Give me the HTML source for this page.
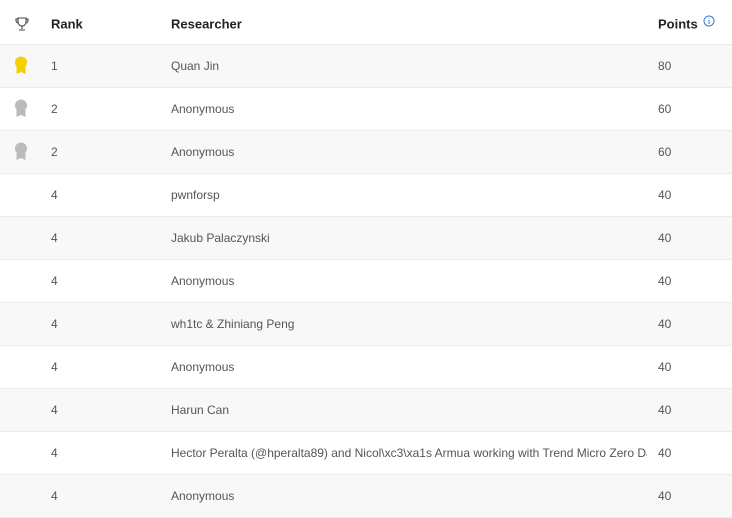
<!DOCTYPE html>
<html><head><style>
body{margin:0;width:732px;height:517px;overflow:hidden;background:#fff;font-family:"Liberation Sans",sans-serif;}
.h{height:45px;position:relative;border-bottom:1px solid #eaeaea;box-sizing:border-box;font-weight:bold;font-size:13px;color:#222;}
.h .c{margin-top:2px}
.r{height:43px;position:relative;border-bottom:1px solid #ececec;box-sizing:border-box;font-size:12px;color:#555;}
.r.s{background:#f8f8f8;}
.c{position:absolute;top:50%;transform:translateY(-50%);white-space:nowrap;}
.a{left:51px}.b{left:171px;width:476px;overflow:hidden}.p{left:658px}
.i{left:13px}
</style></head><body>
<div class="h">
<svg class="c i" style="left:14px" width="16" height="16" viewBox="0 0 16 16" fill="none" stroke="#444" stroke-width="1.1"><path d="M4 2h8v4a4 4 0 0 1-8 0z"/><path d="M4 3H2v1.5a2.5 2.5 0 0 0 2.3 2.5M12 3h2v1.5a2.5 2.5 0 0 1-2.3 2.5"/><path d="M8 10v3M5 14h6"/></svg>
<span class="c a">Rank</span><span class="c" style="left:171px">Researcher</span><span class="c p">Points</span>
<svg class="c" style="left:703px;margin-top:-1px" width="12" height="12" viewBox="0 0 12 12"><circle cx="6" cy="6" r="5" fill="none" stroke="#3a78d8"/><path d="M6 5v4M6 3.2v.8" stroke="#3a78d8"/></svg>
</div>
<div class="r s"><svg class="c i" width="16" height="20" viewBox="0 0 16 20"><circle cx="8" cy="6.5" r="6" fill="#f5cf00"/><path d="M3.5 11v7l4.5-2 4.5 2v-7z" fill="#f5cf00"/></svg><span class="c a">1</span><span class="c b">Quan Jin</span><span class="c p">80</span></div>
<div class="r"><svg class="c i" width="16" height="20" viewBox="0 0 16 20"><circle cx="8" cy="6.5" r="6" fill="#bbb"/><path d="M3.5 11v7l4.5-2 4.5 2v-7z" fill="#bbb"/></svg><span class="c a">2</span><span class="c b">Anonymous</span><span class="c p">60</span></div>
<div class="r s"><svg class="c i" width="16" height="20" viewBox="0 0 16 20"><circle cx="8" cy="6.5" r="6" fill="#bbb"/><path d="M3.5 11v7l4.5-2 4.5 2v-7z" fill="#bbb"/></svg><span class="c a">2</span><span class="c b">Anonymous</span><span class="c p">60</span></div>
<div class="r"><span class="c a">4</span><span class="c b">pwnforsp</span><span class="c p">40</span></div>
<div class="r s"><span class="c a">4</span><span class="c b">Jakub Palaczynski</span><span class="c p">40</span></div>
<div class="r"><span class="c a">4</span><span class="c b">Anonymous</span><span class="c p">40</span></div>
<div class="r s"><span class="c a">4</span><span class="c b">wh1tc &amp; Zhiniang Peng</span><span class="c p">40</span></div>
<div class="r"><span class="c a">4</span><span class="c b">Anonymous</span><span class="c p">40</span></div>
<div class="r s"><span class="c a">4</span><span class="c b">Harun Can</span><span class="c p">40</span></div>
<div class="r"><span class="c a">4</span><span class="c b">Hector Peralta (@hperalta89) and Nicol\xc3\xa1s Armua working with Trend Micro Zero Day Initiative</span><span class="c p">40</span></div>
<div class="r s"><span class="c a">4</span><span class="c b">Anonymous</span><span class="c p">40</span></div>
</body></html>
